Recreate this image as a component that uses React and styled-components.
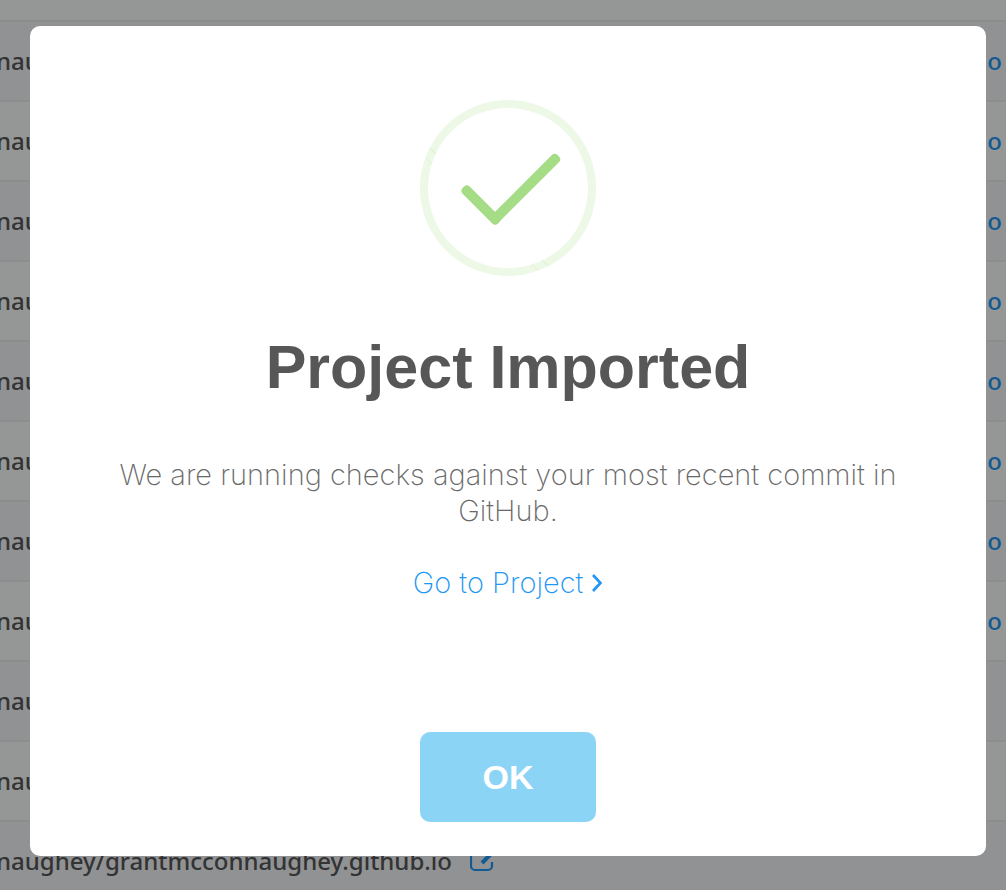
import React from "react";
import styled, { createGlobalStyle } from "styled-components";

const GlobalStyle = createGlobalStyle`
  *, *::before, *::after { box-sizing: border-box; }
  body { margin: 0; background: #f2f3f6; }
`;

const Page = styled.div`
  height: 100vh;
  overflow: hidden;
`;

const ProjectTable = styled.table`
  width: 100%;
  margin-top: -59px;
  border-collapse: collapse;
  font-family: "Noto Sans", sans-serif;
  font-size: 24px;
  font-weight: 500;
  line-height: 36px;
  color: #555555;
`;

const ProjectRow = styled.tr`
  height: 80px;
  background: ${(p) => (p.$striped ? "#f2f3f6" : "#f9fcfa")};
  border-bottom: 2px solid #ebebed;
`;

const Cell = styled.td`
  padding: 0 4px 0 0;
  text-align: ${(p) => p.$align || "left"};
  white-space: nowrap;
`;

const ProjectName = styled.span`
  display: inline-flex;
  align-items: center;
  gap: 18px;
  margin-left: -4px;
`;

const RowLink = styled.a`
  display: inline-flex;
  color: #2196f3;
  text-decoration: none;
`;

const Overlay = styled.div`
  position: fixed;
  inset: 0;
  display: flex;
  align-items: flex-start;
  padding: 26px 20px 34px 30px;
  background: rgba(0, 0, 0, 0.4);
`;

const Modal = styled.section`
  flex: 1;
  display: flex;
  flex-direction: column;
  align-items: center;
  padding: 74px 34px 34px;
  border-radius: 10px;
  background: #ffffff;
  font-family: "Liberation Sans", Arial, sans-serif;
  text-align: center;
`;

const Title = styled.h2`
  margin: 51px 0 0;
  font-size: 61px;
  font-weight: 700;
  line-height: 80px;
  color: #575757;
`;

const Message = styled.p`
  max-width: 800px;
  margin: ${(p) => (p.$first ? "50px" : "36px")} 0 0;
  font-family: Inter, "Liberation Sans", sans-serif;
  font-size: 29px;
  font-weight: 200;
  line-height: 36px;
  color: #696969;
`;

const ProjectLink = styled.a`
  display: inline-flex;
  align-items: center;
  gap: 8px;
  color: #2196f3;
  text-decoration: none;
`;

const OkButton = styled.button`
  width: 176px;
  height: 90px;
  margin-top: 131px;
  padding: 0;
  border: 0;
  border-radius: 10px;
  background: #8cd4f5;
  color: #ffffff;
  font-family: inherit;
  font-size: 34px;
  font-weight: 700;
  cursor: pointer;
`;

const SuccessIcon = () => (
  <svg width="176" height="176" viewBox="0 0 176 176" aria-hidden="true">
    <circle cx="88" cy="88" r="84" fill="none" stroke="#edf8e7" strokeWidth="8" />
    <path d="M10 48.3l5.7 5.4M122.3 160l5.7 5.7" stroke="#c5e9b4" strokeWidth=".6" />
    <path d="M5.7 58l6.3 6M112 164l6 6.3" stroke="#d5efc9" strokeWidth=".6" />
    <g fill="#a5dc86">
      <rect x="36" y="100" width="50" height="10" rx="4" transform="rotate(45 61 105)" />
      <rect x="58" y="84" width="94" height="10" rx="4" transform="rotate(-45 105 89)" />
    </g>
  </svg>
);

const ChevronIcon = () => (
  <svg width="12" height="20" viewBox="0 0 12 20" aria-hidden="true">
    <path d="M2 2l7.5 8L2 18" fill="none" stroke="currentColor" strokeWidth="2.6" />
  </svg>
);

const EditIcon = () => (
  <svg width="24" height="24" viewBox="0 0 24 24" fill="none" stroke="currentColor" strokeWidth="2.2" aria-hidden="true">
    <path d="M14 2H5a4 4 0 0 0-4 4v11a4 4 0 0 0 4 4h13a4 4 0 0 0 4-4v-4" />
    <path d="M12 14L23 3" strokeWidth="4" />
  </svg>
);

const projects = [
  { name: "", link: "" },
  ...Array.from({ length: 8 }, () => ({ name: "nau", link: "o" })),
  { name: "nau", link: "" },
  { name: "nau", link: "" },
  { name: "naughey/grantmcconnaughey.github.io", link: "", editable: true },
];

export default function App() {
  return (
    <>
      <GlobalStyle />
      <Page>
        <ProjectTable>
          <tbody>
            {projects.map((project, i) => (
              <ProjectRow key={i} $striped={i % 2 === 1}>
                <Cell>
                  <ProjectName>
                    {project.name}
                    {project.editable && (
                      <RowLink href="#edit" aria-label="Edit project">
                        <EditIcon />
                      </RowLink>
                    )}
                  </ProjectName>
                </Cell>
                <Cell $align="right">
                  {project.link && <RowLink href="#project">{project.link}</RowLink>}
                </Cell>
              </ProjectRow>
            ))}
          </tbody>
        </ProjectTable>
      </Page>
      <Overlay>
        <Modal role="dialog" aria-modal="true" aria-labelledby="dialog-title">
          <SuccessIcon />
          <Title id="dialog-title">Project Imported</Title>
          <Message $first>
            We are running checks against your most recent commit in GitHub.
          </Message>
          <Message>
            <ProjectLink href="#project">
              Go to Project
              <ChevronIcon />
            </ProjectLink>
          </Message>
          <OkButton type="button">OK</OkButton>
        </Modal>
      </Overlay>
    </>
  );
}
